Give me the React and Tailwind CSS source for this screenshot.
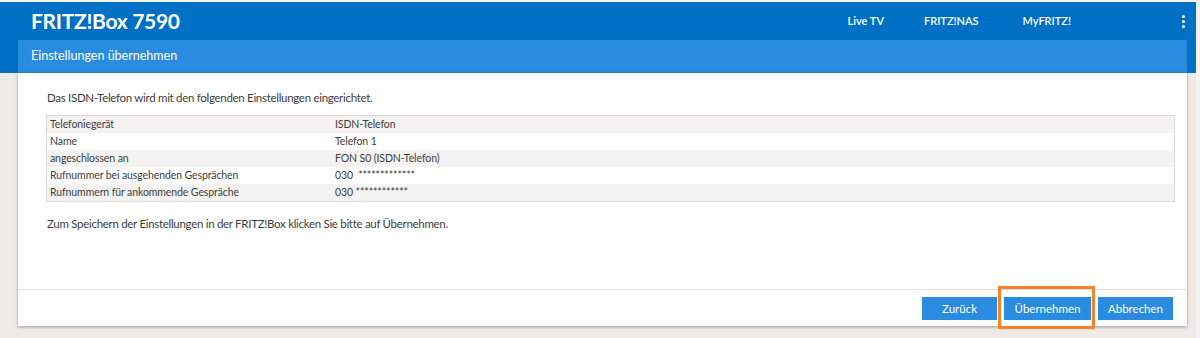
import React from "react";

const rows = [
  ["Telefoniegerät", "ISDN-Telefon"],
  ["Name", "Telefon 1"],
  ["angeschlossen an", "FON S0 (ISDN-Telefon)"],
  ["Rufnummer bei ausgehenden Gesprächen", "030  *************"],
  ["Rufnummern für ankommende Gespräche", "030 ************"],
];

export default function App() {
  return (
    <div
      className="w-[1200px] h-[338px] bg-[#eeebe6] flex overflow-hidden relative text-[#3d3d3d]"
      style={{ fontFamily: "Lato, 'Open Sans', sans-serif" }}
    >
      <div className="flex-1 flex flex-col">
        <div className="h-[2px] bg-[#f4f6f8]" />
        <div className="bg-[#0070c4] h-[71px] flex flex-col">
          <div className="h-[38px] flex items-center pl-[31px] pr-[11px]">
            <div className="text-white font-bold text-[21px] tracking-[-0.3px]">FRITZ!Box 7590</div>
            <div className="flex-1" />
            <div className="flex items-center text-white text-[11px] font-semibold">
              <span className="mr-[40px] ml-[3px]">Live TV</span>
              <span className="mr-[44px]">FRITZ!NAS</span>
              <span className="mr-[111px]">MyFRITZ!</span>
              <span className="flex flex-col gap-[2px]">
                <span className="w-[3px] h-[3px] bg-white rounded-full" />
                <span className="w-[3px] h-[3px] bg-white rounded-full" />
                <span className="w-[3px] h-[3px] bg-white rounded-full" />
              </span>
            </div>
          </div>
          <div className="ml-[18px] mr-[9px] h-[33px] bg-[#2a8ce0] flex items-center pl-[13px] text-white text-[12.5px]">
            Einstellungen übernehmen
          </div>
        </div>
        <div className="ml-[18px] mr-[9px] h-[253px] bg-white shadow-[0_1px_3px_rgba(0,0,0,0.35)] flex flex-col">
          <div className="flex-1 pl-[28px] pr-[12px] pt-[16px] text-[11.5px] tracking-[-0.3px]">
            <div className="h-[17px] flex items-center pl-[1px]">
              Das ISDN-Telefon wird mit den folgenden Einstellungen eingerichtet.
            </div>
            <div className="mt-[9px] border border-[#d9d9d9] text-[10.5px] tracking-[-0.1px]">
              {rows.map((r, i) => (
                <div
                  key={i}
                  className={`h-[17px] flex items-center ${i % 2 === 0 ? "bg-[#f4f3f1]" : "bg-white"}`}
                >
                  <div className="w-[288px] pl-[3px]">{r[0]}</div>
                  <div className="whitespace-pre">{r[1]}</div>
                </div>
              ))}
            </div>
            <div className="mt-[13px] h-[17px] flex items-center pl-[1px]">
              Zum Speichern der Einstellungen in der FRITZ!Box klicken Sie bitte auf Übernehmen.
            </div>
          </div>
          <div className="h-[37px] border-t border-[#dcdcdc] flex items-start justify-end pt-[7px] pr-[14px] gap-[7px] text-[11.5px] text-white">
            <button className="w-[75px] h-[23px] bg-[#2a8ce0] flex items-center justify-center">Zurück</button>
            <button className="w-[87px] h-[23px] bg-[#2a8ce0] flex items-center justify-center">Übernehmen</button>
            <button className="w-[75px] h-[23px] bg-[#2a8ce0] flex items-center justify-center">Abbrechen</button>
          </div>
        </div>
      </div>
      <div className="w-[4px] bg-[#f3f3f3]" />
      <div className="absolute left-[998px] top-[286px] w-[97px] h-[43px] border-[3px] border-[#f5822b]" />
    </div>
  );
}
